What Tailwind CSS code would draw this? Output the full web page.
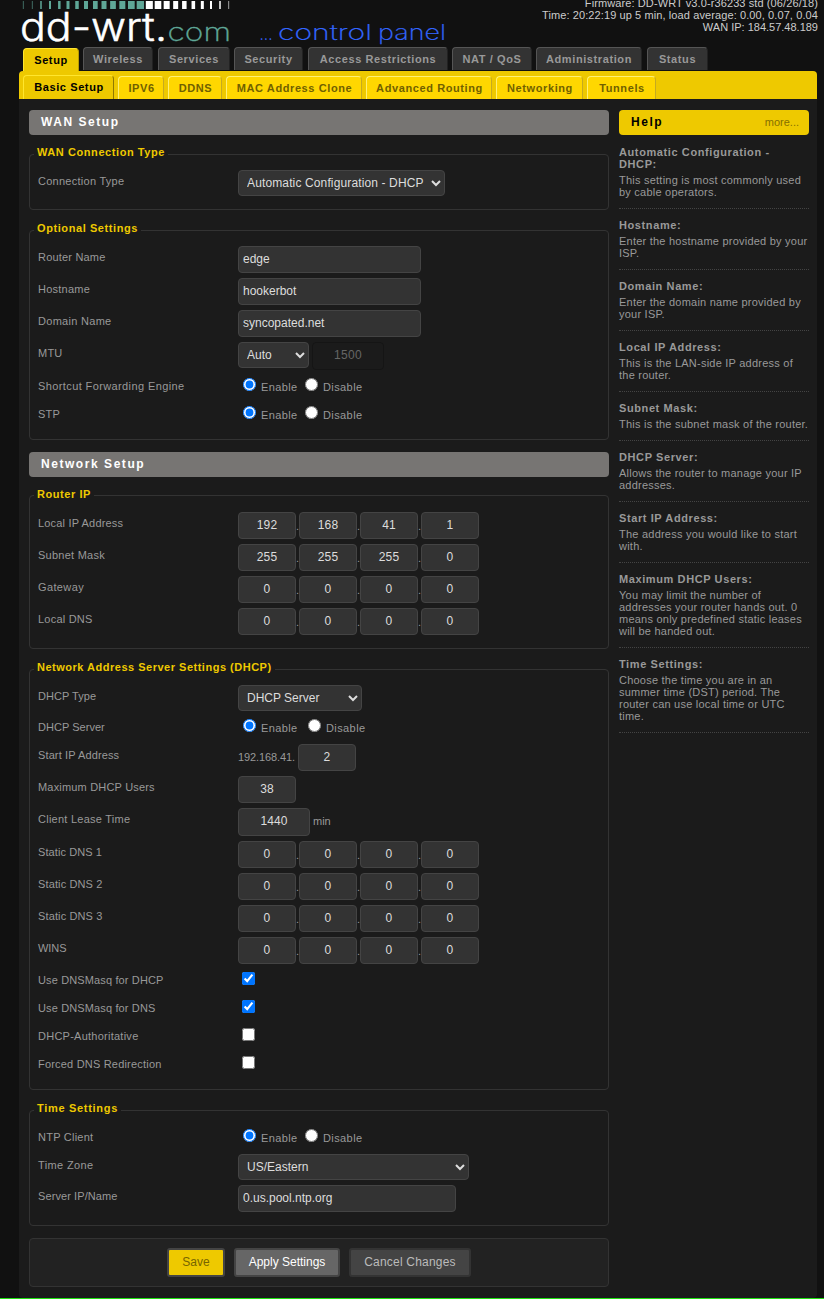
<!DOCTYPE html>
<html lang="en">
<head>
<meta charset="utf-8">
<title>DD-WRT Control Panel - Setup</title>
<script src="https://cdn.jsdelivr.net/npm/@tailwindcss/browser@4"></script>
</head>
<body class="h-[1299px] overflow-hidden bg-[#111] font-['Liberation_Sans',Arial,sans-serif] text-[11px] leading-3 text-[#999]">
<header class="flex h-[47px] justify-between pl-[19px] pr-1.5">
  <svg class="block h-[47px] w-[440px] overflow-visible" viewBox="19 0 440 47">
    <g id="bars"></g>
    <g font-family="Inter, sans-serif">
      <text x="20" y="40.5" font-size="39" font-weight="300" fill="#fff" stroke="#fff" stroke-width=".5" textLength="147" lengthAdjust="spacingAndGlyphs">dd-wrt.</text>
      <text x="167.500" y="40.5" font-size="25" font-weight="200" fill="#5fa797" stroke="#5fa797" stroke-width=".3" textLength="63.500" lengthAdjust="spacingAndGlyphs">com</text>
      <text x="259.500" y="40" font-size="21" font-weight="200" fill="#36f" stroke="#36f" stroke-width=".2" textLength="13" lengthAdjust="spacingAndGlyphs">...</text>
      <text x="278" y="40" font-size="21" font-weight="200" fill="#36f" stroke="#36f" stroke-width=".2" textLength="94" lengthAdjust="spacingAndGlyphs">control</text>
      <text x="378" y="40" font-size="21" font-weight="200" fill="#36f" stroke="#36f" stroke-width=".2" textLength="68" lengthAdjust="spacingAndGlyphs">panel</text>
    </g>
  </svg>
  <div class="-mt-[3px] whitespace-nowrap text-right tracking-[0.1px] text-[#ccc]">
    <div>Firmware: DD-WRT v3.0-r36233 std (06/26/18)</div>
    <div>Time: 20:22:19 up 5 min, load average: 0.00, 0.07, 0.04</div>
    <div class="-mr-0.5 pr-0.5 tracking-normal">WAN IP: 184.57.48.189</div>
  </div>
</header>
<div class="ml-[19px] w-[798px]">
  <nav id="tabs" class="flex h-6 items-start pl-1 font-bold tracking-[0.6px]"></nav>
  <nav id="subtabs" class="flex h-7 items-end rounded-t bg-[#eec900] pl-1 font-bold tracking-[0.6px]"></nav>
  <div class="flex h-[1199px] gap-2.5 rounded-b bg-[#1b1b1b] pl-2.5 pt-[11px]">
    <main class="flex w-[580px] flex-col" id="main">
      <h2 class="h-[25px] shrink-0 rounded bg-[#777573] pl-3 text-xs leading-[25px] font-bold tracking-[1.55px] text-white">WAN Setup</h2>
      <section id="wan" class="mt-[19px] flex h-14 shrink-0 flex-col rounded border border-[#333] pl-2"></section>
      <section id="optional" class="mt-5 flex h-[210px] shrink-0 flex-col rounded border border-[#333] pl-2"></section>
      <h2 class="mt-3 h-[25px] shrink-0 rounded bg-[#777573] pl-3 text-xs leading-[25px] font-bold tracking-[1.55px] text-white">Network Setup</h2>
      <section id="router" class="mt-[18px] flex h-[154px] shrink-0 flex-col rounded border border-[#333] pl-2"></section>
      <section id="dhcp" class="mt-5 flex h-[421px] shrink-0 flex-col rounded border border-[#333] pl-2"></section>
      <section id="time" class="mt-5 flex h-[116px] shrink-0 flex-col rounded border border-[#333] pl-2"></section>
      <div class="mt-3 flex h-[49px] shrink-0 items-start justify-center gap-[9px] rounded border border-[#333] bg-[#222] pt-[9px] text-xs">
        <button class="h-[29px] w-[58px] rounded-[3px] border-2 border-[#444] bg-[#eec900] pb-0.5 text-[#776500]">Save</button>
        <button class="h-[29px] w-[106px] rounded-[3px] border-2 border-[#444] bg-[#666] pb-0.5 text-white">Apply Settings</button>
        <button class="h-[29px] w-[122px] rounded-[3px] border-2 border-[#333] bg-[#444] pb-0.5 tracking-[0.2px] text-[#bbb]">Cancel Changes</button>
      </div>
    </main>
    <aside class="w-[190px]">
      <h2 class="flex h-[25px] justify-between rounded bg-[#eec900] pl-3 pr-2.5 text-xs leading-[25px] font-bold tracking-[1.55px] text-black">Help<span class="text-[11px] font-normal tracking-normal text-[#857000]">more...</span></h2>
      <dl id="help" class="pt-[11px]"></dl>
    </aside>
  </div>
</div>
<div class="h-px bg-[#1ee010]"></div>
<script>
const $ = id => document.getElementById(id);

$('bars').innerHTML = [[70,1],[97,1],[123,1.5],[150,2],[178,2.5],[204,3],[231,3.5],[258,4],[286,4.7],[312,5],[339,5.7],[367,6],[394,6.7],[421,7.3],[448,7],[474,6.6],[500,6],[527,5],[553,4.5],[580,3.6],[607,3],[633,2],[660,1.5],[686,1]]
  .map(([c, w], i) => `<rect x="${c / 3 - w / 2}" y="1" width="${w}" height="8" fill="${i < 14 ? '#5fa797' : '#fff'}" opacity="${i < 2 || i > 22 ? .6 : 1}"/>`).join('');

$('tabs').innerHTML = [['Setup',56,4],['Wireless',70,5],['Services',72,4],['Security',69,5],['Access Restrictions',140,4],['NAT / QoS',80,4],['Administration',106,5],['Status',61,0]]
  .map(([t, w, m], i) => `<a class="${i ? 'h-[23px] border-t-[#555] border-l-[#555] border-r-[#222] bg-[#333] text-[#999] leading-[23px]' : 'mt-px h-[23px] border-t-[#ffe62e] border-l-[#ffe62e] border-r-[#b89b00] bg-[#eec900] text-black leading-[22px]'} shrink-0 rounded-t border border-b-0 text-center" style="width:${w}px;margin-right:${m}px">${t}</a>`).join('');

$('subtabs').innerHTML = [['Basic Setup',91],['IPV6',46],['DDNS',54],['MAC Address Clone',136],['Advanced Routing',126],['Networking',87],['Tunnels',69]]
  .map(([t, w], i) => `<a class="${i ? 'h-[23px] border-t-[#fff176] border-l-[#fff176] border-r-[#c5aa20] bg-[#ffd700] text-[#706000] leading-[23px]' : 'h-6 border-t-[#ffe62e] border-l-[#ffe62e] border-r-[#8f7900] bg-[#eec900] text-black leading-[22px]'} mr-1 shrink-0 rounded-t border border-b-0 pl-px text-center" style="width:${w}px">${t}</a>`).join('');

// Letter spacing that spreads a text over w pixels.
const pen = document.createElement('canvas').getContext('2d');
const fit = (t, w, bold) => {
  pen.font = (bold ? 'bold ' : '') + '11px "Liberation Sans", Arial, sans-serif';
  return `<span style="letter-spacing:${((w - pen.measureText(t).width) / t.length).toFixed(3)}px">${t}</span>`;
};

const legend = (t, w, low) => `<span class="${low ? '-mt-2' : '-mt-[9px]'} -ml-1 h-3 shrink-0 self-start whitespace-nowrap bg-[#1b1b1b] pl-[3px] font-bold text-[#eec900]" style="width:${w}px">${fit(t, w - 6, true)}</span>`;
const row = (label, w, h, control) => `<div class="flex shrink-0 items-start" style="height:${h}px"><label class="w-[200px] shrink-0 pt-[5px] whitespace-nowrap">${fit(label, w)}</label>${control}</div>`;
const input = (v, w, h = 27) => `<input class="shrink-0 rounded border border-[#444] bg-[#333] px-1 pb-0.5 text-xs text-[#ddd]" style="width:${w}px;height:${h}px" value="${v}">`;
const num = (v, w = 58, h = 27) => `<input class="shrink-0 rounded border border-[#444] bg-[#333] px-1 pb-0.5 text-center text-xs tracking-[0.1px] text-[#ddd]" style="width:${w}px;height:${h}px" value="${v}">`;
const select = (v, w, wide) => `<select class="${wide ? 'tracking-[0.13px]' : ''} h-[26px] shrink-0 rounded border border-[#444] bg-[#333] px-1 text-xs text-[#ddd]" style="width:${w}px"><option>${v}</option></select>`;
const ip = vals => vals.map(v => num(v)).join('<span class="w-[3px] shrink-0 overflow-hidden pt-2">.</span>');
const radio = (name, gap = 8) => `<span class="flex pl-[5px]"><input type="radio" class="mt-[3px] size-[13px]" name="${name}" checked><span class="ml-[5px] w-[36px] pt-1.5">${fit('Enable', 36.5)}</span><input type="radio" class="mt-[3px] size-[13px]" style="margin-left:${gap}px" name="${name}"><span class="ml-[5px] pt-1.5">${fit('Disable', 39.5)}</span></span>`;
const check = on => `<input type="checkbox" class="mt-[3px] ml-1 size-[13px]" ${on ? 'checked' : ''}>`;
const spacer = h => `<div class="shrink-0" style="height:${h}px"></div>`;

$('wan').innerHTML = legend('WAN Connection Type', 134) + spacer(12) + row('Connection Type', 86.5, 31, select('Automatic Configuration - DHCP', 207, true));
$('optional').innerHTML = legend('Optional Settings', 107) + spacer(12)
  + row('Router Name', 67.5, 32, input('edge', 183)) + row('Hostname', 52, 32, input('hookerbot', 183)) + row('Domain Name', 73.5, 32, input('syncopated.net', 183))
  + row('MTU', 24.5, 33, select('Auto', 71) + '<input disabled class="ml-[3px] h-7 w-[72px] rounded border border-[#151515] bg-transparent pb-[3px] text-center text-xs tracking-[0.3px] text-[#666]" value="1500">')
  + row('Shortcut Forwarding Engine', 146.5, 28, radio('sfe')) + row('STP', 22, 28, radio('stp'));
$('router').innerHTML = legend('Router IP', 60, true) + spacer(12)
  + row('Local IP Address', 86, 32, ip([192,168,41,1])) + row('Subnet Mask', 67, 32, ip([255,255,255,0]))
  + row('Gateway', 46, 32, ip([0,0,0,0])) + row('Local DNS', 54.5, 32, ip([0,0,0,0]));
$('dhcp').innerHTML = legend('Network Address Server Settings (DHCP)', 241) + spacer(12)
  + row('DHCP Type', 58.5, 31, select('DHCP Server', 124)) + row('DHCP Server', 67, 28, radio('dhcpd', 11))
  + row('Start IP Address', 82, 32, `<span class="w-[60px] pt-[7px]">${fit('192.168.41.', 57)}</span>` + num(2))
  + row('Maximum DHCP Users', 117, 32, num(38)) + row('Client Lease Time', 92.5, 33, num(1440, 72, 28) + '<span class="pt-[7px] pl-[3px]">min</span>')
  + [['Static DNS 1', 64], ['Static DNS 2', 64.5], ['Static DNS 3', 64.5], ['WINS', 28.5]].map(([l, w]) => row(l, w, 32, ip([0,0,0,0]))).join('')
  + row('Use DNSMasq for DHCP', 125.5, 28, check(true)) + row('Use DNSMasq for DNS', 117.5, 28, check(true))
  + row('DHCP-Authoritative', 100.5, 28, check(false)) + row('Forced DNS Redirection', 123.5, 28, check(false));
$('time').innerHTML = legend('Time Settings', 87) + spacer(12)
  + row('NTP Client', 55.5, 28, radio('ntp')) + row('Time Zone', 55.5, 31, select('US/Eastern', 231)) + row('Server IP/Name', 79.5, 31, input('0.us.pool.ntp.org', 218));

$('help').innerHTML = [
  ['Automatic Configuration -<br>DHCP:', 'This setting is most commonly used<br>by cable operators.'],
  ['Hostname:', 'Enter the hostname provided by your<br>ISP.'],
  ['Domain Name:', 'Enter the domain name provided by<br>your ISP.'],
  ['Local IP Address:', 'This is the LAN-side IP address of<br>the router.'],
  ['Subnet Mask:', 'This is the subnet mask of the router.'],
  ['DHCP Server:', 'Allows the router to manage your IP<br>addresses.'],
  ['Start IP Address:', 'The address you would like to start<br>with.'],
  ['Maximum DHCP Users:', 'You may limit the number of<br>addresses your router hands out. 0<br>means only predefined static leases<br>will be handed out.'],
  ['Time Settings:', 'Choose the time you are in an<br>summer time (DST) period. The<br>router can use local time or UTC<br>time.']
].map(([t, d]) => `<dt class="whitespace-nowrap font-bold tracking-[0.6px]">${t}</dt><dd class="mb-[10px] whitespace-nowrap border-b border-dotted border-[#444] pt-1 pb-[10px] tracking-[0.23px]">${d}</dd>`).join('');
</script>
</body>
</html>
